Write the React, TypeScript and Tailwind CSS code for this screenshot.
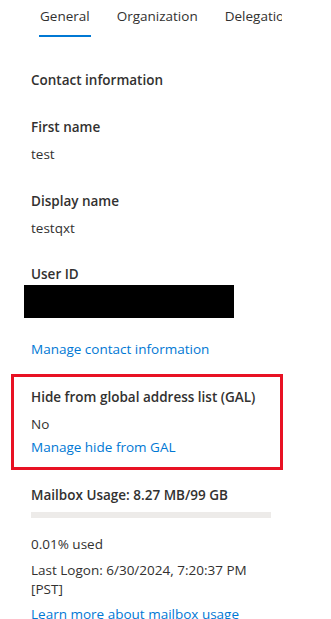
import React from 'react';

const tabs = ['General', 'Organization', 'Delegation'];

const Label: React.FC<{ children: React.ReactNode; className?: string }> = ({ children, className = '' }) => (
  <div className={`text-[13.5px] leading-[20px] font-semibold text-[#323130] ${className}`}>{children}</div>
);

const Value: React.FC<{ children: React.ReactNode; className?: string }> = ({ children, className = '' }) => (
  <div className={`text-[13.5px] leading-[20px] text-[#323130] ${className}`}>{children}</div>
);

const Link: React.FC<{ children: React.ReactNode; className?: string }> = ({ children, className = '' }) => (
  <a href="#" className={`block text-[13.5px] leading-[20px] text-[#0078d4] ${className}`}>{children}</a>
);

const App: React.FC = () => {
  return (
    <div className="w-[331px] h-[619px] overflow-hidden bg-white" style={{ fontFamily: '"Segoe UI", "Open Sans", sans-serif' }}>
      {/* tabs */}
      <div className="flex pl-[39px] pt-[6px] gap-[25px] whitespace-nowrap overflow-hidden w-[282px]">
        {tabs.map((t, i) => (
          <div key={t} className="flex flex-col items-center">
            <span className="text-[13.5px] leading-[20px] px-[1px] text-[#323130]">{t}</span>
            <div className={`mt-[9px] h-[2px] w-full ${i === 0 ? 'bg-[#0078d4]' : 'bg-transparent'}`} />
          </div>
        ))}
      </div>

      <div className="pl-[31px]">
        <Label className="mt-[33px]">Contact information</Label>

        <Label className="mt-[27px]">First name</Label>
        <Value className="mt-[7px]">test</Value>

        <Label className="mt-[27px]">Display name</Label>
        <Value className="mt-[7px]">testqxt</Value>

        <Label className="mt-[26px]">User ID</Label>
        <div className="mt-[1px] -ml-[7px] w-[210px] h-[33px] bg-black" />

        <Link className="mt-[21px]">Manage contact information</Link>

        <div className="mt-[15px] -ml-[20px] w-[272px] border-[3px] border-[#e81123] pl-[17px] pt-[10px] pb-[10px]">
          <Label>Hide from global address list (GAL)</Label>
          <Value className="mt-[7px]">No</Value>
          <Link className="mt-[3px]">Manage hide from GAL</Link>
        </div>

        <Label className="mt-[15px]">Mailbox Usage: 8.27 MB/99 GB</Label>
        <div className="mt-[7px] w-[240px] h-[6px] bg-[#edebe9]" />

        <Value className="mt-[16px]">0.01% used</Value>
        <div className="mt-[7px] w-[240px] text-[13.5px] leading-[19px] text-[#323130]">
          Last Logon: 6/30/2024, 7:20:37 PM
          <br />
          [PST]
        </div>
        <Link className="mt-[5px]">Learn more about mailbox usage</Link>
      </div>
    </div>
  );
};

export default App;
